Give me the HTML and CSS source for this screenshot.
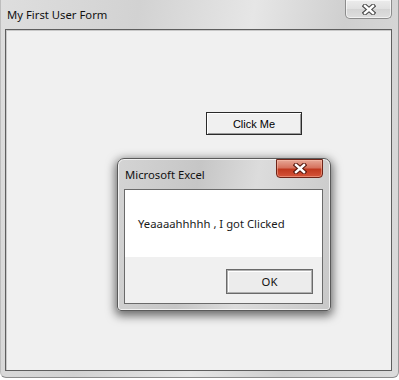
FILE: index.html
```html
<!DOCTYPE html>
<html lang="en">
<head>
    <meta charset="UTF-8">
    <title>My First User Form</title>
    <link rel="stylesheet" href="styles.css">
</head>
<body>

<!-- ===== USER FORM WINDOW ===== -->
<div class="window">
    <div class="titlebar">
        <span class="title_text">My First User Form</span>
        <button class="close_button">
            <svg width="14" height="11" viewBox="0 0 14 11">
                <path d="M3 2 L11 9 M11 2 L3 9" stroke="#4a4a4a" stroke-width="4.6" stroke-linecap="square" fill="none"/>
                <path d="M3 2 L11 9 M11 2 L3 9" stroke="#fff" stroke-width="2.4" stroke-linecap="square" fill="none"/>
            </svg>
        </button>
    </div>

    <div class="client">
        <button class="form_button">Click Me</button>
    </div>
</div>

<!-- ===== MESSAGE BOX ===== -->
<div class="msgbox">
    <div class="msgbox_titlebar">
        <span class="msgbox_title">Microsoft Excel</span>
        <button class="close_button red">
            <svg width="14" height="11" viewBox="0 0 14 11">
                <path d="M3 2 L11 9 M11 2 L3 9" stroke="#5a1a10" stroke-width="4.6" stroke-linecap="square" fill="none"/>
                <path d="M3 2 L11 9 M11 2 L3 9" stroke="#fff" stroke-width="2.4" stroke-linecap="square" fill="none"/>
            </svg>
        </button>
    </div>
    <div class="msgbox_client">
        <div class="msgbox_message">Yeaaaahhhhh , I got Clicked</div>
        <div class="msgbox_footer">
            <button class="ok_button">OK</button>
        </div>
    </div>
</div>

</body>
</html>
```

FILE: styles.css
```css
body {
    margin: 0;
    background-color: #ffffff;
    font-family: "Noto Sans", "Open Sans", sans-serif;
    position: relative;
    width: 399px;
    height: 380px;
    overflow: hidden;
}

button {
    cursor: pointer;
    font-family: inherit;
}

/* ===== Main window ===== */
.window {
    box-sizing: border-box;
    width: 399px;
    height: 378px;
    padding: 0 6px 0 4px;
    background: linear-gradient(100deg, #dedede 0%, #d2d2d2 30%, #e6e6e6 55%, #cfcfcf 75%, #dcdcdc 100%);
    border-right: 1px solid #9a9a9a;
    border-bottom: 1px solid #8c8c8c;
    border-left: 1px solid #bdbdbd;
    border-radius: 0 0 6px 6px;
}

.titlebar {
    height: 29px;
    display: flex;
    justify-content: space-between;
    align-items: flex-start;
}

.title_text {
    font-size: 11.3px;
    color: #111;
    padding: 7px 0 0 2px;
}

.close_button {
    width: 47px;
    height: 19px;
    margin: 0;
    padding: 0;
    display: flex;
    align-items: center;
    justify-content: center;
    border: 1px solid #8c8c8c;
    border-top: none;
    border-radius: 0 0 5px 5px;
    background: linear-gradient(#ececec, #e0e0e0 50%, #d4d4d4 51%, #dedede);
    box-shadow: inset 0 0 0 1px rgba(255, 255, 255, 0.6);
}

.close_button.red {
    border: 1px solid #6e2418;
    border-radius: 0 0 4px 4px;
    background: linear-gradient(#e7a796, #d6735e 45%, #c0391f 55%, #d5553b);
    box-shadow: inset 0 0 0 1px rgba(255, 200, 180, 0.45);
}

.client {
    position: relative;
    box-sizing: border-box;
    height: 342px;
    background-color: #f0f0f0;
    border: 1px solid #5e5e5e;
    box-shadow: inset 1px 1px 0 #c8c8c8;
}

.form_button {
    position: absolute;
    left: 200px;
    top: 82px;
    width: 96px;
    height: 23px;
    font-family: "Liberation Sans", Arial, sans-serif;
    font-size: 11px;
    color: #000;
    background-color: #f0f0f0;
    border: 1px solid #2a2a2a;
    box-shadow: inset 1px 1px 0 #ffffff, inset -1px -1px 0 #9a9a9a;
}

/* ===== Message box ===== */
.msgbox {
    position: absolute;
    left: 117px;
    top: 158px;
    box-sizing: border-box;
    width: 214px;
    height: 153px;
    padding: 0 7px 6px 6px;
    border: 1px solid #5a5a5a;
    border-radius: 7px 7px 4px 4px;
    background: linear-gradient(100deg, #d4d4d4 0%, #c6c6c6 35%, #dcdcdc 60%, #c8c8c8 100%);
    box-shadow: 0 3px 10px 2px rgba(0, 0, 0, 0.55), inset 0 0 0 1px rgba(255, 255, 255, 0.7);
    display: flex;
    flex-direction: column;
}

.msgbox_titlebar {
    height: 30px;
    display: flex;
    justify-content: space-between;
    align-items: flex-start;
}

.msgbox_title {
    font-size: 11.3px;
    color: #111;
    padding: 8px 0 0 1px;
}

.msgbox_client {
    flex: 1;
    display: flex;
    flex-direction: column;
    border: 1px solid #6a6a6a;
    background-color: #f0f0f0;
}

.msgbox_message {
    height: 67px;
    display: flex;
    align-items: center;
    padding-left: 13px;
    background-color: #ffffff;
    font-size: 11.3px;
    color: #1a1a1a;
}

.msgbox_footer {
    flex: 1;
    display: flex;
    justify-content: flex-end;
    align-items: flex-start;
    padding: 12px 9px 0 0;
}

.ok_button {
    width: 87px;
    height: 25px;
    font-size: 11.3px;
    color: #111;
    background-color: #ececec;
    border: 1px solid #6a6a6a;
    box-shadow: inset 0 0 0 1px #b0b0b0, inset 2px 2px 0 #ffffff;
}
```
